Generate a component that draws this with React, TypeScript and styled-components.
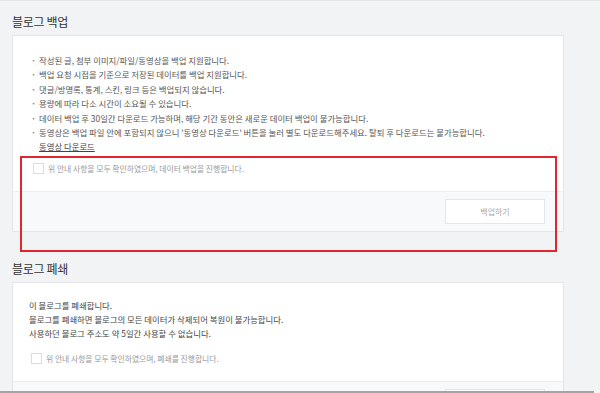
import React from "react";
import styled, { createGlobalStyle } from "styled-components";

const GlobalStyle = createGlobalStyle`
  html, body { margin: 0; padding: 0; }
  body {
    background: #f2f3f5;
    font-family: "Noto Sans CJK KR", "Noto Sans", sans-serif;
    color: #444;
  }
`;

const Page = styled.div`
  height: 393px;
  display: flex;
  flex-direction: column;
  overflow: hidden;
  border-top: 1px solid #e3e5e8;
  box-sizing: border-box;
  background: #f2f3f5;
`;

const Content = styled.div`
  flex: 1;
  overflow: hidden;
  padding: 0 36px 0 12px;
`;

const BottomBar = styled.div`
  height: 2px;
  flex: none;
  width: 594px;
  background: #a3a3a3;
`;

const SectionTitle = styled.h2<{ $gap?: number }>`
  margin: ${(p) => p.$gap ?? 0}px 0 0;
  padding-top: 8px;
  font-size: 12px;
  line-height: 26px;
  font-weight: 400;
  color: #333;
  letter-spacing: -0.3px;
`;

const Card = styled.section`
  position: relative;
  background: #fff;
  border: 1px solid #e3e5e9;
`;

const CardBody = styled.div<{ $pl: number; $pt: number }>`
  padding: ${(p) => p.$pt}px 16px 0 ${(p) => p.$pl}px;
  font-size: 8.4px;
  color: #555;
`;

const BulletList = styled.ul`
  list-style: none;
  margin: 0;
  padding: 0;
`;

const Bullet = styled.li`
  position: relative;
  padding-left: 8px;
  line-height: 14.4px;
  &::before {
    content: "·";
    position: absolute;
    left: 0;
    top: 0;
    font-weight: 700;
    color: #777;
  }
`;

const DownloadLink = styled.a`
  display: inline-block;
  margin-left: 8px;
  line-height: 14px;
  color: #444;
  text-decoration: underline;
`;

const Paragraph = styled.p`
  margin: 0;
  line-height: 13.6px;
  color: #444;
`;

const CheckRow = styled.label<{ $mt: number; $mb: number }>`
  display: flex;
  align-items: center;
  gap: 4px;
  margin: ${(p) => p.$mt}px 0 ${(p) => p.$mb}px 2px;
  color: #999;
  font-size: 7.8px;
`;

const CheckBox = styled.span`
  width: 9px;
  height: 9px;
  border: 1px solid #dcdcdc;
  background: #fff;
  flex: none;
`;

const Footer = styled.div`
  display: flex;
  justify-content: flex-end;
  background: #f8f9fb;
  border-top: 1px solid #eceef1;
  padding: 7px 18px 7px 0;
`;

const Button = styled.button`
  width: 100px;
  height: 25px;
  background: #fff;
  border: 1px solid #e4e6e9;
  color: #aaa;
  font-family: inherit;
  font-size: 8px;
  padding: 0;
`;

const Highlight = styled.div`
  position: absolute;
  left: 7px;
  top: 120px;
  width: 537px;
  height: 96px;
  border: 2px solid #e0262f;
  box-sizing: border-box;
  pointer-events: none;
`;

const bullets = [
  "작성된 글, 첨부 이미지/파일/동영상을 백업 지원합니다.",
  "백업 요청 시점을 기준으로 저장된 데이터를 백업 지원합니다.",
  "댓글/방명록, 통계, 스킨, 링크 등은 백업되지 않습니다.",
  "용량에 따라 다소 시간이 소요될 수 있습니다.",
  "데이터 백업 후 30일간 다운로드 가능하며, 해당 기간 동안은 새로운 데이터 백업이 불가능합니다.",
  "동영상은 백업 파일 안에 포함되지 않으니 '동영상 다운로드' 버튼을 눌러 별도 다운로드해주세요. 탈퇴 후 다운로드는 불가능합니다.",
];

export default function App() {
  return (
    <>
      <GlobalStyle />
      <Page>
        <Content>
          <SectionTitle>블로그 백업</SectionTitle>
          <Card>
            <CardBody $pl={18} $pt={17}>
              <BulletList>
                {bullets.map((b) => (
                  <Bullet key={b}>{b}</Bullet>
                ))}
              </BulletList>
              <DownloadLink>동영상 다운로드</DownloadLink>
              <CheckRow $mt={10} $mb={17}>
                <CheckBox />
                위 안내 사항을 모두 확인하였으며, 데이터 백업을 진행합니다.
              </CheckRow>
            </CardBody>
            <Footer>
              <Button>백업하기</Button>
            </Footer>
            <Highlight />
          </Card>
          <SectionTitle $gap={16}>블로그 폐쇄</SectionTitle>
          <Card>
            <CardBody $pl={16} $pt={16}>
              <Paragraph>이 블로그를 폐쇄합니다.</Paragraph>
              <Paragraph>블로그를 폐쇄하면 블로그의 모든 데이터가 삭제되어 복원이 불가능합니다.</Paragraph>
              <Paragraph>사용하던 블로그 주소도 약 5일간 사용할 수 없습니다.</Paragraph>
              <CheckRow $mt={13} $mb={17}>
                <CheckBox />
                위 안내 사항을 모두 확인하였으며, 폐쇄를 진행합니다.
              </CheckRow>
            </CardBody>
            <Footer>
              <Button aria-label="폐쇄하기" />
            </Footer>
          </Card>
        </Content>
        <BottomBar />
      </Page>
    </>
  );
}
